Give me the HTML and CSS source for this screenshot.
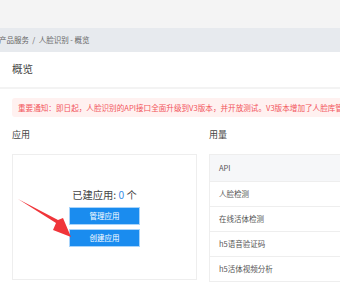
FILE: index.html
```html
<!DOCTYPE html>
<html>
<head>
<meta charset="utf-8">
<link rel="stylesheet" href="styles.css">
</head>
<body>
<div class="page">
  <div class="topbar"></div>
  <div class="crumb">产品服务 &nbsp;/&nbsp; 人脸识别 - 概览</div>
  <div class="main">
    <div class="title">概览</div>
    <div class="sep"></div>
    <div class="alert">重要通知：即日起，人脸识别的API接口全面升级到V3版本，并开放测试。V3版本增加了人脸库管理等功能</div>
    <div class="cols">
      <div class="col left">
        <div class="sub">应用</div>
        <div class="card">
          <div class="count">已建应用: <span class="num">0</span> 个</div>
          <button class="btn">管理应用</button>
          <button class="btn">创建应用</button>
        </div>
      </div>
      <div class="col right">
        <div class="sub">用量</div>
        <div class="table">
          <div class="row head">API</div>
          <div class="row">人脸检测</div>
          <div class="row">在线活体检测</div>
          <div class="row">h5语音验证码</div>
          <div class="row">h5活体视频分析</div>
        </div>
      </div>
    </div>
  </div>
  <svg class="arrow" width="80" height="50" viewBox="0 0 80 50">
    <path d="M18 199 L56 223 L53 230 L71 237 L63 218 L58 220 Z" transform="translate(0,-190)" fill="#f0353a"/>
  </svg>
</div>
</body>
</html>
```
FILE: styles.css
```css
html, body {
  margin: 0;
  padding: 0;
  background: #fff;
}
body {
  width: 340px;
  height: 286px;
  overflow: hidden;
  font-family: "Noto Sans CJK SC", "Noto Sans", sans-serif;
  color: #333;
}
.page {
  position: relative;
  width: 600px;
}
.topbar {
  height: 28px;
  background: #f4f4f4;
}
.crumb {
  height: 24px;
  line-height: 24px;
  background: #e7eaee;
  font-size: 7.5px;
  color: #666;
  margin-left: -1px;
}
.main {
  padding: 0 12px;
}
.title {
  height: 35px;
  line-height: 34px;
  font-size: 10.5px;
  color: #444;
}
.sep {
  height: 2px;
  background: #f3f3f3;
  margin: 0 -12px;
}
.alert {
  margin-top: 9px;
  height: 19px;
  line-height: 19px;
  background: #fff1f0;
  border-radius: 3px;
  color: #f2545b;
  font-size: 7.6px;
  padding-left: 6px;
  white-space: nowrap;
}
.cols {
  display: flex;
  gap: 12px;
}
.col.left {
  width: 185px;
}
.col.right {
  width: 300px;
}
.sub {
  margin-top: 10px;
  height: 16px;
  line-height: 16px;
  font-size: 9px;
  color: #444;
  margin-bottom: 11px;
}
.card {
  box-sizing: border-box;
  height: 126px;
  border: 1px solid #eeeeee;
  display: flex;
  flex-direction: column;
  align-items: center;
  justify-content: center;
  padding-top: 2px;
}
.count {
  font-size: 10.3px;
  line-height: 14px;
  color: #444;
  margin-bottom: 3px;
}
.num {
  color: #3a8ee6;
}
.btn {
  box-sizing: border-box;
  width: 71px;
  height: 18px;
  margin: 2px 0;
  padding: 0;
  border: 1px solid #a8d4fb;
  background: #1a8cef;
  color: #fff;
  font-family: "Noto Sans CJK SC", sans-serif;
  font-size: 7.5px;
  line-height: 16px;
}
.table {
  box-sizing: border-box;
  border: 1px solid #eeeeee;
}
.row {
  box-sizing: border-box;
  height: 25px;
  line-height: 24px;
  border-top: 1px solid #eeeeee;
  padding-left: 9px;
  font-size: 7.5px;
  color: #555;
}
.row.head {
  height: 26px;
  line-height: 26px;
  border-top: 0;
  background: #f6f7f9;
}
.arrow {
  position: absolute;
  left: 0;
  top: 190px;
}
```
